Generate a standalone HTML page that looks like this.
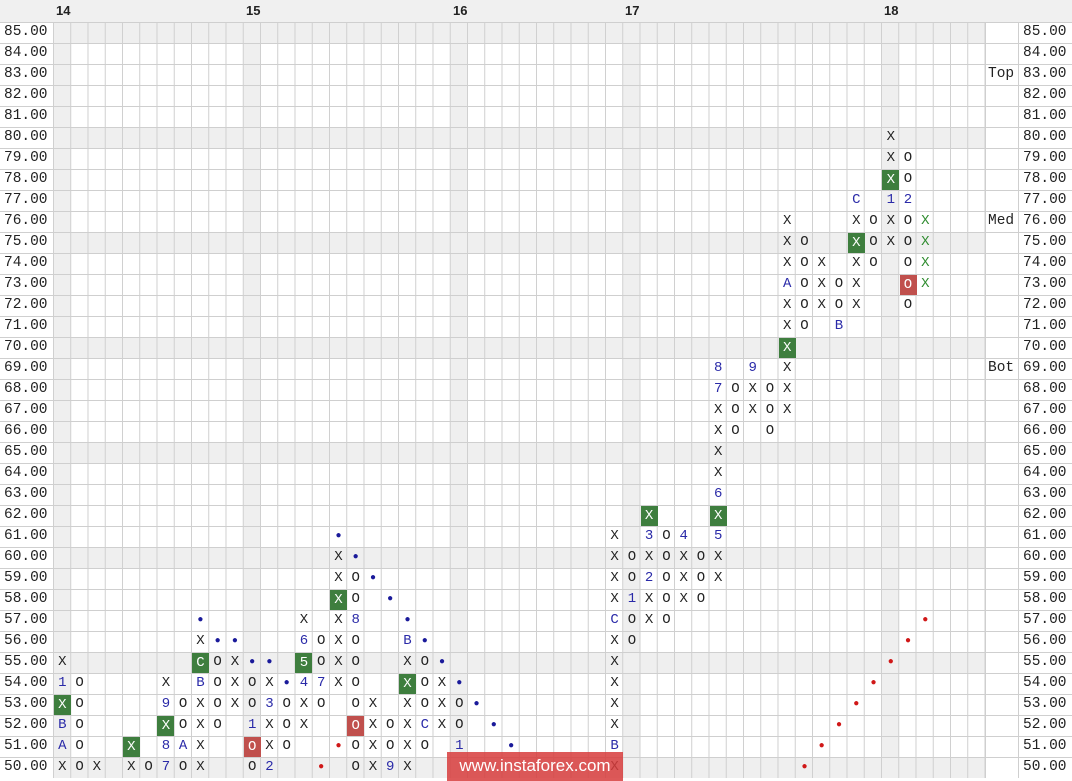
<!DOCTYPE html>
<html><head><meta charset="utf-8"><style>
body{margin:0;width:1072px;height:781px;overflow:hidden;background:#fff;font-family:"Liberation Mono",monospace;position:relative}
.hd{position:absolute;left:0;top:0;width:1072px;height:22px;background:#f0f0f0}
.hl{position:absolute;top:3px;font:bold 13px "Liberation Sans",sans-serif;color:#222}
.grid{position:absolute;left:53.3px;top:22px;width:932px;height:756px;
background-image:linear-gradient(to right,#cfcfcf 1px,transparent 1px),linear-gradient(to bottom,#cfcfcf 1px,transparent 1px);
background-size:17.26px 21px;background-position:0 0}
.sr{position:absolute;left:53.3px;width:932px;height:21px;background:#efefef}
.sc{position:absolute;top:22px;width:17.26px;height:756px;background:#efefef}
.hlines{position:absolute;left:0;top:22px;width:1072px;height:756px;background-image:linear-gradient(to bottom,#cfcfcf 1px,transparent 1px);background-size:1072px 21px}
.vl{position:absolute;top:22px;width:1px;height:756px;background:#cfcfcf}
.ax{position:absolute;font-size:14.5px;color:#222;line-height:21px}
.c{position:absolute;width:17px;height:20px;line-height:21px;text-align:center;font-size:14px;color:#222;margin-left:0.5px}
.b{color:#2a2aa8}
.g{background:#3e7e3e;color:#fff;height:20px;margin-top:1px;line-height:20px}
.r{background:#c0504d;color:#fff;height:20px;margin-top:1px;line-height:20px}
.gt{color:#2e8b2e}
.d{color:#1a1a9a;font-size:10px}
.rd{color:#d01818;font-size:10px}
.wm{position:absolute;left:447px;top:752px;width:176px;height:29px;background:rgba(215,60,60,.85);color:#fff;font:17px "Liberation Sans",sans-serif;line-height:28px;text-align:center}
</style></head><body>
<div class="hd"></div>
<div class="hl" style="left:56px">14</div>
<div class="hl" style="left:246px">15</div>
<div class="hl" style="left:453px">16</div>
<div class="hl" style="left:625px">17</div>
<div class="hl" style="left:884px">18</div>

<div class="sr" style="top:22px"></div>
<div class="sr" style="top:127px"></div>
<div class="sr" style="top:232px"></div>
<div class="sr" style="top:337px"></div>
<div class="sr" style="top:442px"></div>
<div class="sr" style="top:547px"></div>
<div class="sr" style="top:652px"></div>
<div class="sr" style="top:757px"></div>
<div class="sc" style="left:53.3px"></div>
<div class="sc" style="left:243.2px"></div>
<div class="sc" style="left:450.3px"></div>
<div class="sc" style="left:622.9px"></div>
<div class="sc" style="left:881.8px"></div>
<div class="hlines"></div>
<div class="grid"></div>
<div class="vl" style="left:985px"></div>
<div class="vl" style="left:1018px"></div>

<div class="ax" style="left:4px;top:22px">85.00<br>84.00<br>83.00<br>82.00<br>81.00<br>80.00<br>79.00<br>78.00<br>77.00<br>76.00<br>75.00<br>74.00<br>73.00<br>72.00<br>71.00<br>70.00<br>69.00<br>68.00<br>67.00<br>66.00<br>65.00<br>64.00<br>63.00<br>62.00<br>61.00<br>60.00<br>59.00<br>58.00<br>57.00<br>56.00<br>55.00<br>54.00<br>53.00<br>52.00<br>51.00<br>50.00</div>
<div class="ax" style="left:1023px;top:22px">85.00<br>84.00<br>83.00<br>82.00<br>81.00<br>80.00<br>79.00<br>78.00<br>77.00<br>76.00<br>75.00<br>74.00<br>73.00<br>72.00<br>71.00<br>70.00<br>69.00<br>68.00<br>67.00<br>66.00<br>65.00<br>64.00<br>63.00<br>62.00<br>61.00<br>60.00<br>59.00<br>58.00<br>57.00<br>56.00<br>55.00<br>54.00<br>53.00<br>52.00<br>51.00<br>50.00</div>
<div class="ax" style="left:988px;top:64px">Top</div>
<div class="ax" style="left:988px;top:211px">Med</div>
<div class="ax" style="left:988px;top:358px">Bot</div>

<!-- col0 -->
<div class="c" style="left:53.3px;top:652px">X</div>
<div class="c b" style="left:53.3px;top:673px">1</div>
<div class="c g" style="left:53.3px;top:694px">X</div>
<div class="c b" style="left:53.3px;top:715px">B</div>
<div class="c b" style="left:53.3px;top:736px">A</div>
<div class="c" style="left:53.3px;top:757px">X</div>
<!-- col1 -->
<div class="c" style="left:70.6px;top:673px">O</div>
<div class="c" style="left:70.6px;top:694px">O</div>
<div class="c" style="left:70.6px;top:715px">O</div>
<div class="c" style="left:70.6px;top:736px">O</div>
<div class="c" style="left:70.6px;top:757px">O</div>
<div class="c" style="left:87.8px;top:757px">X</div>
<div class="c g" style="left:122.3px;top:736px">X</div>
<div class="c" style="left:122.3px;top:757px">X</div>
<div class="c" style="left:139.6px;top:757px">O</div>
<!-- col6 -->
<div class="c" style="left:156.9px;top:673px">X</div>
<div class="c b" style="left:156.9px;top:694px">9</div>
<div class="c g" style="left:156.9px;top:715px">X</div>
<div class="c b" style="left:156.9px;top:736px">8</div>
<div class="c b" style="left:156.9px;top:757px">7</div>
<!-- col7 -->
<div class="c" style="left:174.1px;top:694px">O</div>
<div class="c" style="left:174.1px;top:715px">O</div>
<div class="c b" style="left:174.1px;top:736px">A</div>
<div class="c" style="left:174.1px;top:757px">O</div>
<!-- col8 -->
<div class="c d" style="left:191.4px;top:610px">●</div>
<div class="c" style="left:191.4px;top:631px">X</div>
<div class="c g" style="left:191.4px;top:652px">C</div>
<div class="c b" style="left:191.4px;top:673px">B</div>
<div class="c" style="left:191.4px;top:694px">X</div>
<div class="c" style="left:191.4px;top:715px">X</div>
<div class="c" style="left:191.4px;top:736px">X</div>
<div class="c" style="left:191.4px;top:757px">X</div>
<!-- col9 -->
<div class="c d" style="left:208.6px;top:631px">●</div>
<div class="c" style="left:208.6px;top:652px">O</div>
<div class="c" style="left:208.6px;top:673px">O</div>
<div class="c" style="left:208.6px;top:694px">O</div>
<div class="c" style="left:208.6px;top:715px">O</div>
<!-- col10 -->
<div class="c d" style="left:225.9px;top:631px">●</div>
<div class="c" style="left:225.9px;top:652px">X</div>
<div class="c" style="left:225.9px;top:673px">X</div>
<div class="c" style="left:225.9px;top:694px">X</div>
<!-- col11 -->
<div class="c d" style="left:243.2px;top:652px">●</div>
<div class="c" style="left:243.2px;top:673px">O</div>
<div class="c" style="left:243.2px;top:694px">O</div>
<div class="c b" style="left:243.2px;top:715px">1</div>
<div class="c r" style="left:243.2px;top:736px">O</div>
<div class="c" style="left:243.2px;top:757px">O</div>
<!-- col12 -->
<div class="c d" style="left:260.4px;top:652px">●</div>
<div class="c" style="left:260.4px;top:673px">X</div>
<div class="c b" style="left:260.4px;top:694px">3</div>
<div class="c" style="left:260.4px;top:715px">X</div>
<div class="c" style="left:260.4px;top:736px">X</div>
<div class="c b" style="left:260.4px;top:757px">2</div>
<!-- col13 -->
<div class="c d" style="left:277.7px;top:673px">●</div>
<div class="c" style="left:277.7px;top:694px">O</div>
<div class="c" style="left:277.7px;top:715px">O</div>
<div class="c" style="left:277.7px;top:736px">O</div>
<!-- col14 -->
<div class="c" style="left:294.9px;top:610px">X</div>
<div class="c b" style="left:294.9px;top:631px">6</div>
<div class="c g" style="left:294.9px;top:652px">5</div>
<div class="c b" style="left:294.9px;top:673px">4</div>
<div class="c" style="left:294.9px;top:694px">X</div>
<div class="c" style="left:294.9px;top:715px">X</div>
<!-- col15 -->
<div class="c" style="left:312.2px;top:631px">O</div>
<div class="c" style="left:312.2px;top:652px">O</div>
<div class="c b" style="left:312.2px;top:673px">7</div>
<div class="c" style="left:312.2px;top:694px">O</div>
<div class="c rd" style="left:312.2px;top:757px">●</div>
<!-- col16 -->
<div class="c d" style="left:329.5px;top:526px">●</div>
<div class="c" style="left:329.5px;top:547px">X</div>
<div class="c" style="left:329.5px;top:568px">X</div>
<div class="c g" style="left:329.5px;top:589px">X</div>
<div class="c" style="left:329.5px;top:610px">X</div>
<div class="c" style="left:329.5px;top:631px">X</div>
<div class="c" style="left:329.5px;top:652px">X</div>
<div class="c" style="left:329.5px;top:673px">X</div>
<div class="c rd" style="left:329.5px;top:736px">●</div>
<!-- col17 -->
<div class="c d" style="left:346.7px;top:547px">●</div>
<div class="c" style="left:346.7px;top:568px">O</div>
<div class="c" style="left:346.7px;top:589px">O</div>
<div class="c b" style="left:346.7px;top:610px">8</div>
<div class="c" style="left:346.7px;top:631px">O</div>
<div class="c" style="left:346.7px;top:652px">O</div>
<div class="c" style="left:346.7px;top:673px">O</div>
<div class="c" style="left:346.7px;top:694px">O</div>
<div class="c r" style="left:346.7px;top:715px">O</div>
<div class="c" style="left:346.7px;top:736px">O</div>
<div class="c" style="left:346.7px;top:757px">O</div>
<!-- col18 -->
<div class="c d" style="left:364px;top:568px">●</div>
<div class="c" style="left:364px;top:694px">X</div>
<div class="c" style="left:364px;top:715px">X</div>
<div class="c" style="left:364px;top:736px">X</div>
<div class="c" style="left:364px;top:757px">X</div>
<!-- col19 -->
<div class="c d" style="left:381.2px;top:589px">●</div>
<div class="c" style="left:381.2px;top:715px">O</div>
<div class="c" style="left:381.2px;top:736px">O</div>
<div class="c b" style="left:381.2px;top:757px">9</div>
<!-- col20 -->
<div class="c d" style="left:398.5px;top:610px">●</div>
<div class="c b" style="left:398.5px;top:631px">B</div>
<div class="c" style="left:398.5px;top:652px">X</div>
<div class="c g" style="left:398.5px;top:673px">X</div>
<div class="c" style="left:398.5px;top:694px">X</div>
<div class="c" style="left:398.5px;top:715px">X</div>
<div class="c" style="left:398.5px;top:736px">X</div>
<div class="c" style="left:398.5px;top:757px">X</div>
<!-- col21 -->
<div class="c d" style="left:415.8px;top:631px">●</div>
<div class="c" style="left:415.8px;top:652px">O</div>
<div class="c" style="left:415.8px;top:673px">O</div>
<div class="c" style="left:415.8px;top:694px">O</div>
<div class="c b" style="left:415.8px;top:715px">C</div>
<div class="c" style="left:415.8px;top:736px">O</div>
<!-- col22 -->
<div class="c d" style="left:433px;top:652px">●</div>
<div class="c" style="left:433px;top:673px">X</div>
<div class="c" style="left:433px;top:694px">X</div>
<div class="c" style="left:433px;top:715px">X</div>
<!-- col23 -->
<div class="c d" style="left:450.3px;top:673px">●</div>
<div class="c" style="left:450.3px;top:694px">O</div>
<div class="c" style="left:450.3px;top:715px">O</div>
<div class="c b" style="left:450.3px;top:736px">1</div>
<div class="c d" style="left:467.5px;top:694px">●</div>
<div class="c d" style="left:484.8px;top:715px">●</div>
<div class="c d" style="left:502.1px;top:736px">●</div>
<!-- col32 -->
<div class="c" style="left:605.6px;top:526px">X</div>
<div class="c" style="left:605.6px;top:547px">X</div>
<div class="c" style="left:605.6px;top:568px">X</div>
<div class="c" style="left:605.6px;top:589px">X</div>
<div class="c b" style="left:605.6px;top:610px">C</div>
<div class="c" style="left:605.6px;top:631px">X</div>
<div class="c" style="left:605.6px;top:652px">X</div>
<div class="c" style="left:605.6px;top:673px">X</div>
<div class="c" style="left:605.6px;top:694px">X</div>
<div class="c" style="left:605.6px;top:715px">X</div>
<div class="c b" style="left:605.6px;top:736px">B</div>
<div class="c" style="left:605.6px;top:757px">X</div>
<!-- col33 -->
<div class="c" style="left:622.9px;top:547px">O</div>
<div class="c" style="left:622.9px;top:568px">O</div>
<div class="c b" style="left:622.9px;top:589px">1</div>
<div class="c" style="left:622.9px;top:610px">O</div>
<div class="c" style="left:622.9px;top:631px">O</div>
<!-- col34 -->
<div class="c g" style="left:640.1px;top:505px">X</div>
<div class="c b" style="left:640.1px;top:526px">3</div>
<div class="c" style="left:640.1px;top:547px">X</div>
<div class="c b" style="left:640.1px;top:568px">2</div>
<div class="c" style="left:640.1px;top:589px">X</div>
<div class="c" style="left:640.1px;top:610px">X</div>
<!-- col35 -->
<div class="c" style="left:657.4px;top:526px">O</div>
<div class="c" style="left:657.4px;top:547px">O</div>
<div class="c" style="left:657.4px;top:568px">O</div>
<div class="c" style="left:657.4px;top:589px">O</div>
<div class="c" style="left:657.4px;top:610px">O</div>
<!-- col36 -->
<div class="c b" style="left:674.7px;top:526px">4</div>
<div class="c" style="left:674.7px;top:547px">X</div>
<div class="c" style="left:674.7px;top:568px">X</div>
<div class="c" style="left:674.7px;top:589px">X</div>
<!-- col37 -->
<div class="c" style="left:691.9px;top:547px">O</div>
<div class="c" style="left:691.9px;top:568px">O</div>
<div class="c" style="left:691.9px;top:589px">O</div>
<!-- col38 -->
<div class="c b" style="left:709.2px;top:358px">8</div>
<div class="c b" style="left:709.2px;top:379px">7</div>
<div class="c" style="left:709.2px;top:400px">X</div>
<div class="c" style="left:709.2px;top:421px">X</div>
<div class="c" style="left:709.2px;top:442px">X</div>
<div class="c" style="left:709.2px;top:463px">X</div>
<div class="c b" style="left:709.2px;top:484px">6</div>
<div class="c g" style="left:709.2px;top:505px">X</div>
<div class="c b" style="left:709.2px;top:526px">5</div>
<div class="c" style="left:709.2px;top:547px">X</div>
<div class="c" style="left:709.2px;top:568px">X</div>
<!-- col39 -->
<div class="c" style="left:726.4px;top:379px">O</div>
<div class="c" style="left:726.4px;top:400px">O</div>
<div class="c" style="left:726.4px;top:421px">O</div>
<!-- col40 -->
<div class="c b" style="left:743.7px;top:358px">9</div>
<div class="c" style="left:743.7px;top:379px">X</div>
<div class="c" style="left:743.7px;top:400px">X</div>
<!-- col41 -->
<div class="c" style="left:761px;top:379px">O</div>
<div class="c" style="left:761px;top:400px">O</div>
<div class="c" style="left:761px;top:421px">O</div>
<!-- col42 -->
<div class="c" style="left:778.2px;top:211px">X</div>
<div class="c" style="left:778.2px;top:232px">X</div>
<div class="c" style="left:778.2px;top:253px">X</div>
<div class="c b" style="left:778.2px;top:274px">A</div>
<div class="c" style="left:778.2px;top:295px">X</div>
<div class="c" style="left:778.2px;top:316px">X</div>
<div class="c g" style="left:778.2px;top:337px">X</div>
<div class="c" style="left:778.2px;top:358px">X</div>
<div class="c" style="left:778.2px;top:379px">X</div>
<div class="c" style="left:778.2px;top:400px">X</div>
<!-- col43 -->
<div class="c" style="left:795.5px;top:232px">O</div>
<div class="c" style="left:795.5px;top:253px">O</div>
<div class="c" style="left:795.5px;top:274px">O</div>
<div class="c" style="left:795.5px;top:295px">O</div>
<div class="c" style="left:795.5px;top:316px">O</div>
<div class="c rd" style="left:795.5px;top:757px">●</div>
<!-- col44 -->
<div class="c" style="left:812.7px;top:253px">X</div>
<div class="c" style="left:812.7px;top:274px">X</div>
<div class="c" style="left:812.7px;top:295px">X</div>
<div class="c rd" style="left:812.7px;top:736px">●</div>
<!-- col45 -->
<div class="c" style="left:830px;top:274px">O</div>
<div class="c" style="left:830px;top:295px">O</div>
<div class="c b" style="left:830px;top:316px">B</div>
<div class="c rd" style="left:830px;top:715px">●</div>
<!-- col46 -->
<div class="c b" style="left:847.3px;top:190px">C</div>
<div class="c" style="left:847.3px;top:211px">X</div>
<div class="c g" style="left:847.3px;top:232px">X</div>
<div class="c" style="left:847.3px;top:253px">X</div>
<div class="c" style="left:847.3px;top:274px">X</div>
<div class="c" style="left:847.3px;top:295px">X</div>
<div class="c rd" style="left:847.3px;top:694px">●</div>
<!-- col47 -->
<div class="c" style="left:864.5px;top:211px">O</div>
<div class="c" style="left:864.5px;top:232px">O</div>
<div class="c" style="left:864.5px;top:253px">O</div>
<div class="c rd" style="left:864.5px;top:673px">●</div>
<!-- col48 -->
<div class="c" style="left:881.8px;top:127px">X</div>
<div class="c" style="left:881.8px;top:148px">X</div>
<div class="c g" style="left:881.8px;top:169px">X</div>
<div class="c b" style="left:881.8px;top:190px">1</div>
<div class="c" style="left:881.8px;top:211px">X</div>
<div class="c" style="left:881.8px;top:232px">X</div>
<div class="c rd" style="left:881.8px;top:652px">●</div>
<!-- col49 -->
<div class="c" style="left:899px;top:148px">O</div>
<div class="c" style="left:899px;top:169px">O</div>
<div class="c b" style="left:899px;top:190px">2</div>
<div class="c" style="left:899px;top:211px">O</div>
<div class="c" style="left:899px;top:232px">O</div>
<div class="c" style="left:899px;top:253px">O</div>
<div class="c r" style="left:899px;top:274px">O</div>
<div class="c" style="left:899px;top:295px">O</div>
<div class="c rd" style="left:899px;top:631px">●</div>
<!-- col50 -->
<div class="c gt" style="left:916.3px;top:211px">X</div>
<div class="c gt" style="left:916.3px;top:232px">X</div>
<div class="c gt" style="left:916.3px;top:253px">X</div>
<div class="c gt" style="left:916.3px;top:274px">X</div>
<div class="c rd" style="left:916.3px;top:610px">●</div>

<div class="wm">www.instaforex.com</div>
</body></html>
